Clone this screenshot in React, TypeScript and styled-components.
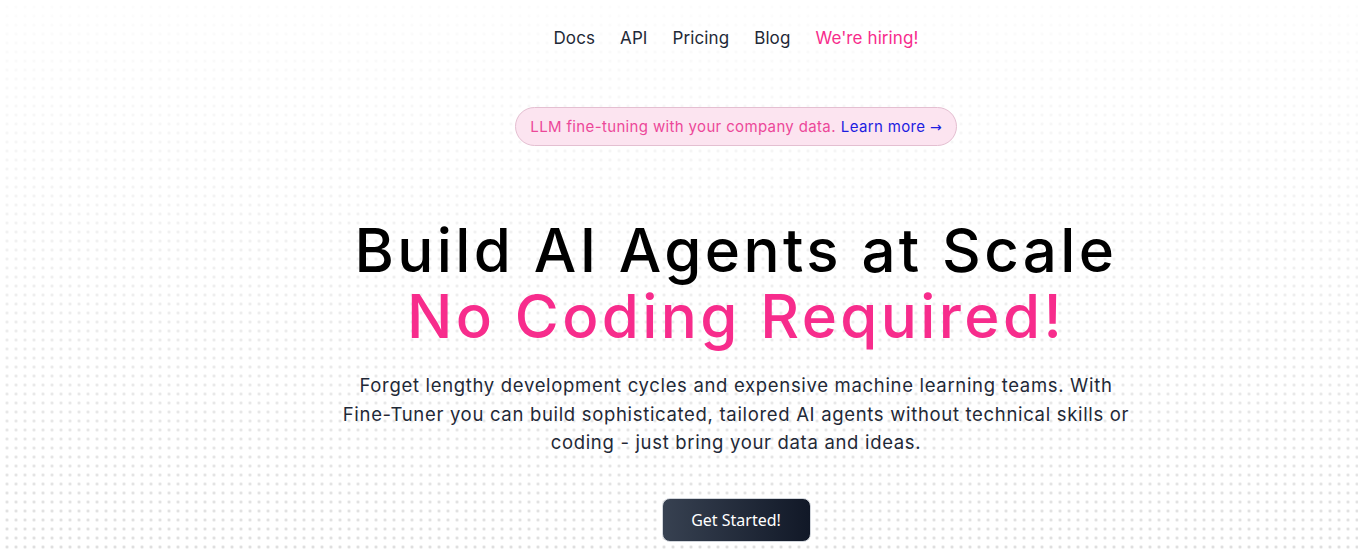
import React from 'react';
import styled, { createGlobalStyle } from 'styled-components';

const GlobalStyle = createGlobalStyle`
  html, body {
    margin: 0;
    padding: 0;
    background: #ffffff;
  }
  body {
    font-family: Inter, "Noto Sans", sans-serif;
    color: #1f2937;
  }
  * {
    box-sizing: border-box;
  }
`;

const Page = styled.div`
  min-height: 554px;
  padding-left: 114px;
  background-color: #ffffff;
  background-image:
    linear-gradient(to bottom, rgba(255, 255, 255, 0.92) 0%, rgba(255, 255, 255, 0.55) 45%, rgba(255, 255, 255, 0) 100%),
    radial-gradient(circle, #d9d9d9 1.1px, transparent 1.6px);
  background-size: 100% 100%, 9px 9px;
  background-position: 0 0, 2.5px 2.5px;
`;

const Nav = styled.nav`
  display: flex;
  justify-content: center;
  gap: 25px;
  padding-top: 26px;
  height: 107px;
`;

const NavLink = styled.a<{ $accent?: boolean }>`
  font-size: 17px;
  line-height: 24px;
  letter-spacing: 0.1px;
  color: ${props => (props.$accent ? '#f72c8c' : '#1f2937')};
  text-decoration: none;
  cursor: pointer;
`;

const Hero = styled.main`
  display: flex;
  flex-direction: column;
  align-items: center;
`;

const Badge = styled.div`
  display: flex;
  align-items: center;
  gap: 5px;
  height: 39px;
  padding: 0 14px;
  border: 1px solid #e4bfd1;
  border-radius: 999px;
  background: #fce4f0;
  font-size: 15px;
  letter-spacing: 0.35px;
  color: #ec4899;
`;

const BadgeLink = styled.a`
  color: #1d1de0;
  text-decoration: none;
  cursor: pointer;
`;

const Arrow = styled.span`
  font-family: "DejaVu Sans", sans-serif;
  font-size: 14px;
  letter-spacing: 0;
`;

const Headline = styled.h1`
  margin: 71px 0 0;
  font-size: 60px;
  line-height: 66px;
  font-weight: 500;
  color: #000000;
  text-align: center;
  letter-spacing: 3.4px;
`;

const Accent = styled.span`
  display: block;
  color: #f72c8c;
`;

const Lead = styled.p`
  margin: 22px 0 0;
  font-size: 18.5px;
  line-height: 28.5px;
  letter-spacing: 0.68px;
  color: #1f2937;
  text-align: center;
`;

const CtaButton = styled.button`
  margin-top: 41px;
  width: 149px;
  height: 44px;
  border: 1px solid #d1d5db;
  border-radius: 8px;
  background: linear-gradient(to right, #374151, #111827);
  color: #ffffff;
  font-family: "Noto Sans", "Open Sans", sans-serif;
  font-size: 16px;
  cursor: pointer;
`;

export default function App() {
  return (
    <>
      <GlobalStyle />
      <Page>
        <Nav>
          <NavLink>Docs</NavLink>
          <NavLink>API</NavLink>
          <NavLink>Pricing</NavLink>
          <NavLink>Blog</NavLink>
          <NavLink $accent>We're hiring!</NavLink>
        </Nav>
        <Hero>
          <Badge>
            LLM fine-tuning with your company data.
            <BadgeLink>
              Learn more <Arrow>→</Arrow>
            </BadgeLink>
          </Badge>
          <Headline>
            Build AI Agents at Scale
            <Accent>No Coding Required!</Accent>
          </Headline>
          <Lead>
            Forget lengthy development cycles and expensive machine learning teams. With
            <br />
            Fine-Tuner you can build sophisticated, tailored AI agents without technical skills or
            <br />
            coding - just bring your data and ideas.
          </Lead>
          <CtaButton>Get Started!</CtaButton>
        </Hero>
      </Page>
    </>
  );
}
